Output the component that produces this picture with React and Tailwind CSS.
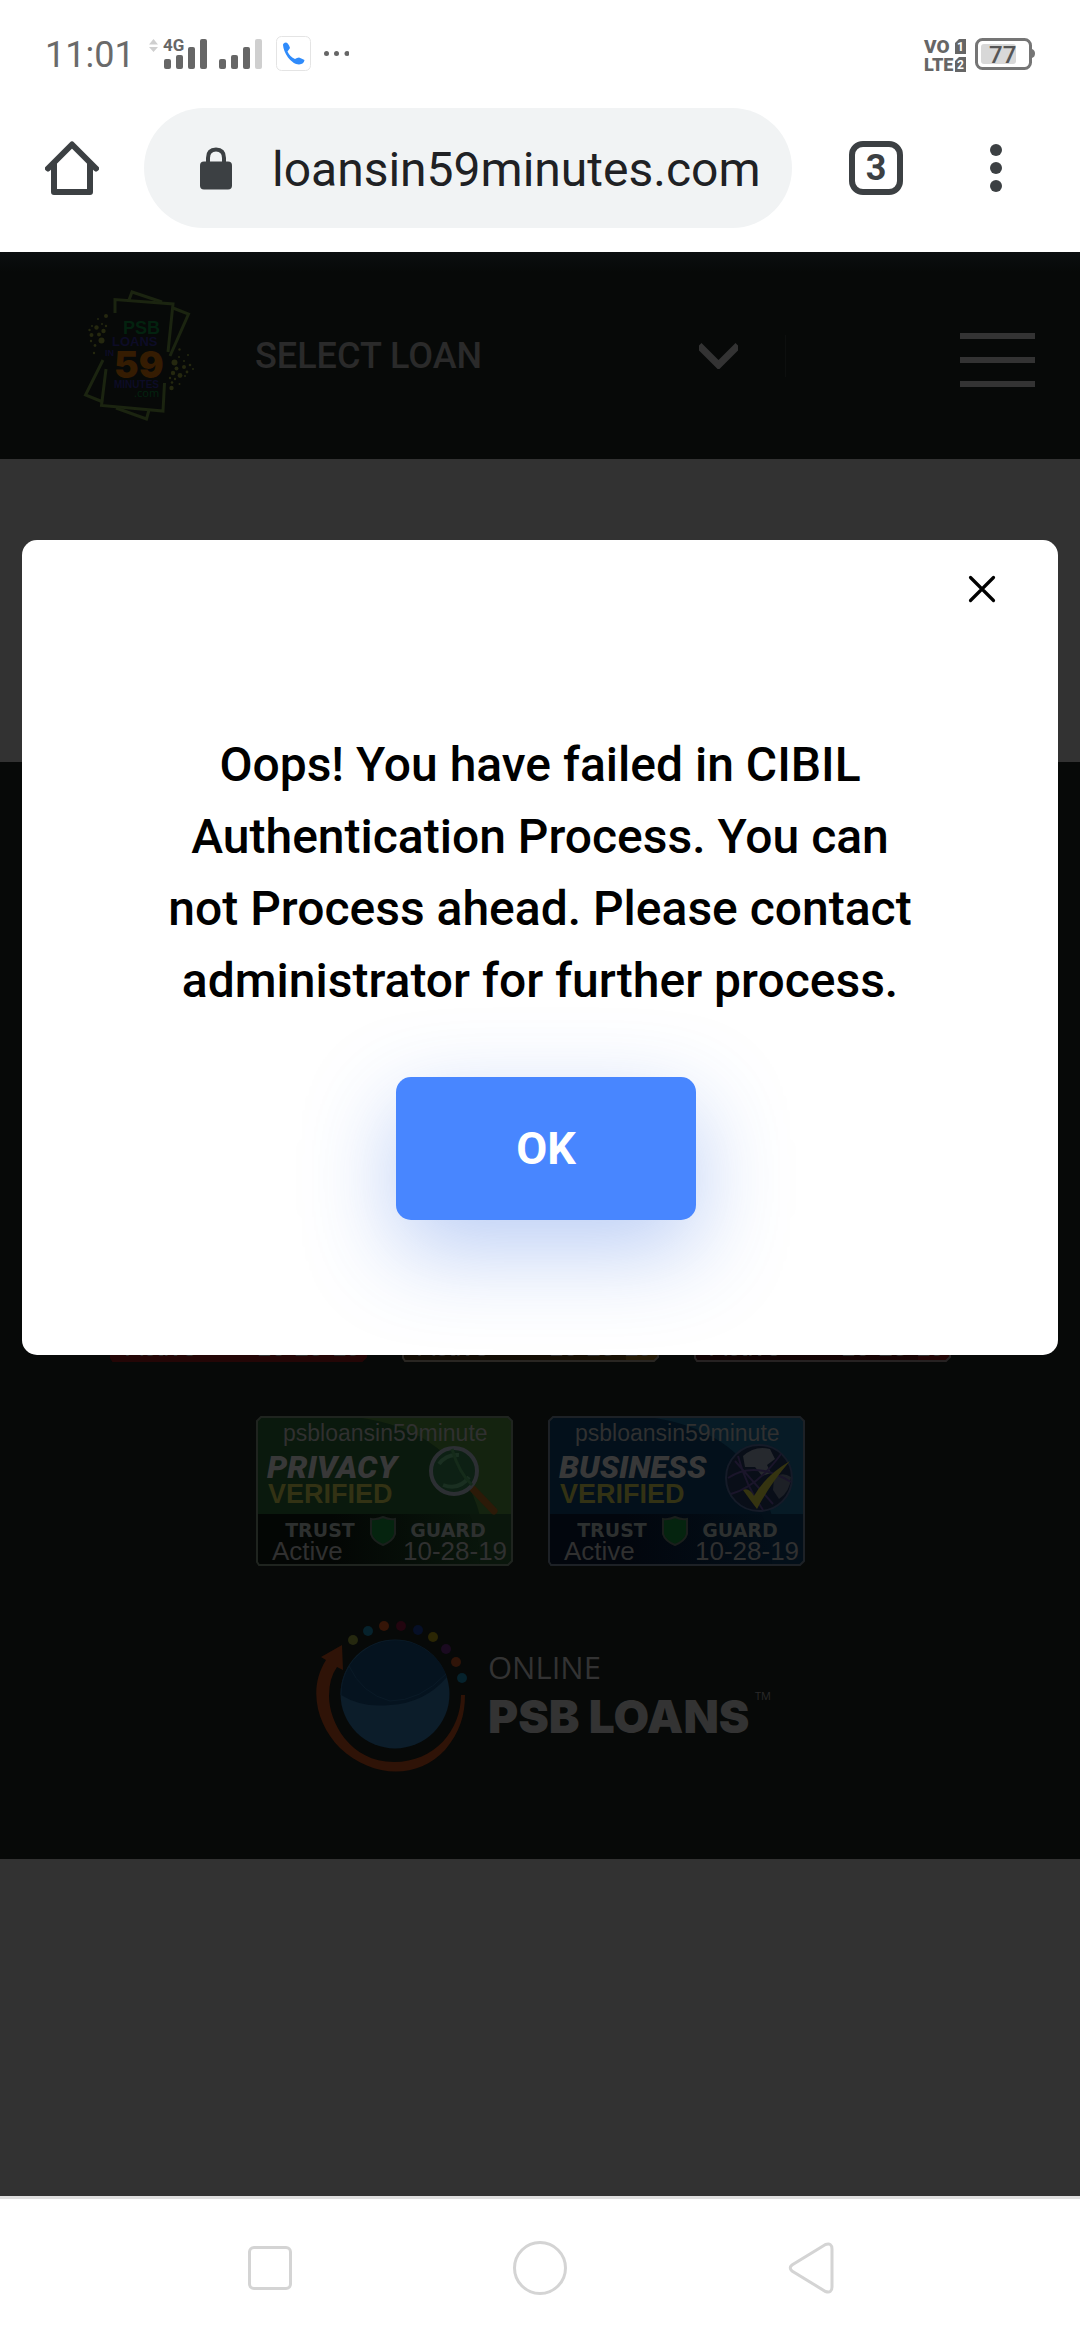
const bars = "fill-[#666666]";

function StatusBar() {
  return (
    <div className="flex h-[72px] items-end justify-between pr-[44px] pl-[45px] text-[#666666]">
      <div className="flex h-[42px] items-center">
        <span className="mt-2 mr-[14px] text-[36px] leading-[42px] text-[#6a6a6a]">11:01</span>
        <svg className="h-[42px] w-[200px]" viewBox="149 30 200 42" aria-hidden="true">
          <path d="M149 44.5 L153.5 39 L158 44.5Z M149 47 L153.5 52 L158 47Z" className="fill-[#cfcfcf]" />
          <text x="163" y="51" className="fill-[#666666] text-[17px] font-bold">4G</text>
          <rect x="164" y="59" width="7" height="10" rx="2" className={bars} />
          <rect x="176" y="55" width="7" height="14" rx="2" className={bars} />
          <rect x="188" y="47" width="7" height="22" rx="2" className={bars} />
          <rect x="200" y="39" width="7" height="30" rx="2" className={bars} />
          <rect x="219" y="59" width="7" height="10" rx="2" className={bars} />
          <rect x="231" y="55" width="7" height="14" rx="2" className={bars} />
          <rect x="243" y="47" width="7" height="22" rx="2" className={bars} />
          <rect x="255" y="39" width="7" height="30" rx="2" className="fill-[#cfcfcf]" />
          <rect x="276.5" y="36.5" width="34" height="34" rx="5" className="fill-white stroke-[#e4e4e4]" />
          <path
            d="M283 45 Q283 43 286 42.500 Q288.500 43 290 48 Q288.500 50 287.500 51.500 Q290 57 295 59 Q297 57.500 299 57.500 Q302 58.500 304.500 60 Q304 64 299 64.500 Q293 64 288 57.500 Q283.500 51 283 45Z"
            className="fill-[#2f8bfb]"
          />
          <circle cx="326.500" cy="53.500" r="2.500" className={bars} />
          <circle cx="336.500" cy="53.500" r="2.500" className={bars} />
          <circle cx="347" cy="53.500" r="2.500" className={bars} />
        </svg>
      </div>
      <svg className="h-[46px] w-[112px] -mb-1 overflow-visible" viewBox="924 30 112 46" aria-hidden="true">
        <text x="924" y="53" className="fill-[#666666] text-[19px] font-black">VO</text>
        <text x="924" y="71" className="fill-[#666666] text-[18px] font-black">LTE</text>
        <path d="M955 43 L959 39 H966 V54 H955Z M955 61 L959 57 H966 V72 H955Z" className="fill-[#666666]" />
        <text x="957" y="51" className="fill-white text-[12px] font-bold">1</text>
        <text x="957" y="69" className="fill-white text-[12px] font-bold">2</text>
        <rect x="976.5" y="39.5" width="54" height="29" rx="6" className="fill-white stroke-[#757575] stroke-3" />
        <rect x="981" y="44" width="35" height="20" rx="3" className="fill-[#d8d8d8]" />
        <path d="M1032 49 Q1035 50 1035 53.500 Q1035 57 1032 58Z" className="fill-[#757575]" />
        <text x="989" y="63" className="fill-[#555555] text-[24px] font-medium">77</text>
      </svg>
    </div>
  );
}

function BrowserBar() {
  return (
    <div className="flex h-[180px] items-center pt-3 pr-[78px] pl-[45px] text-[#3c4043]">
      <button aria-label="Home" className="mr-[45px] shrink-0">
        <svg className="h-[54px] w-[54px]" viewBox="0 0 54 54" fill="none" stroke="currentColor" strokeWidth="6" strokeLinecap="round" strokeLinejoin="round">
          <path d="M3 27.500 L27 3.500 L51 27.500" />
          <path d="M9 23 V51 H45 V23" />
        </svg>
      </button>
      <div className="mr-[57px] flex h-[120px] min-w-0 flex-1 items-center rounded-full bg-[#f1f3f4] pl-14">
        <svg className="h-[43px] w-[32px] shrink-0" viewBox="0 0 32 43" aria-hidden="true">
          <path d="M8 17 V11 Q8 2.500 16 2.500 Q24 2.500 24 11 V17" fill="none" stroke="currentColor" strokeWidth="4" />
          <rect y="14.500" width="32" height="28" rx="4" fill="currentColor" />
        </svg>
        <input
          aria-label="Address"
          className="mt-1 ml-10 w-full min-w-0 bg-transparent text-[48px] leading-[60px] text-[#202124] outline-none"
          defaultValue="loansin59minutes.com"
        />
      </div>
      <button aria-label="3 open tabs" className="mr-[87px] flex h-[54px] w-[54px] shrink-0 items-center justify-center rounded-[14px] border-6 border-[#3c4043] text-[36px] leading-none font-bold">
        3
      </button>
      <button aria-label="Menu" className="flex shrink-0 flex-col gap-[6px]">
        <span className="size-3 rounded-full bg-[#3c4043]" />
        <span className="size-3 rounded-full bg-[#3c4043]" />
        <span className="size-3 rounded-full bg-[#3c4043]" />
      </button>
    </div>
  );
}

const sparks = [
  [106, 316, 2], [98, 319, 1], [102, 324, 1], [106, 326, 1.2], [96.5, 327.5, 2.2], [92, 326, 1], [89.500, 330, 1.2],
  [103.500, 331, 2.2], [91.500, 335, 2], [99, 334.500, 2], [101.500, 340.500, 3], [91, 341, 1.2], [95, 345.500, 1.4], [94, 353, 1.2],
  [179.500, 349.500, 1.2], [188, 355, 1], [179, 357, 1], [174.500, 362.500, 3], [184, 361, 1], [190, 365, 1.3],
  [184, 367, 2], [176.500, 368.500, 2], [193, 369, 1], [173, 373, 2.2], [187, 372, 1.4], [180, 375.500, 2.4],
  [185, 376, 1], [170, 378, 1.2], [175, 379, 1.2], [172, 382.500, 1.3], [179.500, 384, 1], [171.500, 388, 2.2],
];

function BrandMark() {
  return (
    <svg className="h-[136px] w-[118px]" viewBox="80 288 118 136" role="img" aria-label="PSB Loans in 59 Minutes">
      <g className="fill-none stroke-[#1b2410] stroke-[3px]">
        <path d="M129 300 L132 292 L162 302" />
        <path d="M115 313 V299.500 L173 304 L168 352" />
        <path d="M173 308 L188.500 314 L170 356" />
        <path d="M103 360 L85.500 395 L103 402" />
        <path d="M106 369 L101.500 405.500 L163 411 L164.500 383" />
        <path d="M116 408 L146.500 419 L149 410" />
      </g>
      <g className="fill-[#25280f]">
        {sparks.map(([x, y, r]) => (
          <circle key={`${x}-${y}`} cx={x} cy={y} r={r} />
        ))}
      </g>
      <g className="font-['Liberation_Sans',sans-serif] font-bold">
        <text x="123" y="333.500" className="fill-[#03220f] text-[18px]">PSB</text>
        <text x="112" y="346" className="fill-[#0d0c26] text-[13px]">LOANS</text>
        <text x="105" y="356" className="fill-[#0d0c26] text-[9px]">IN</text>
        <text x="114" y="378" className="fill-[#351c02] font-[Inter,sans-serif] text-[37px] font-black">59</text>
        <text x="114" y="388" className="fill-[#0d0c26] text-[10px]">MINUTES</text>
      </g>
      <text x="134" y="397" className="fill-[#03220f] font-['Noto_Sans',sans-serif] text-[11px]">.com</text>
    </svg>
  );
}

function SiteHeader() {
  return (
    <header className="flex h-[207px] items-center bg-[#070908] bg-linear-to-b from-[#0b0e10] to-[#070908] to-10% pr-[45px] pl-20">
      <a href="#home" className="mr-[57px] shrink-0">
        <BrandMark />
      </a>
      <button className="flex min-w-0 flex-1 items-center justify-between text-[36px] leading-[42px] font-medium text-[#2a2a2a]">
        SELECT LOAN
        <svg className="mr-[47px] h-[27px] w-[39px]" viewBox="0 0 39 27" aria-hidden="true">
          <path d="M0 3.500 L19.500 23 L39 3.500" fill="none" stroke="#333333" strokeWidth="7" />
        </svg>
      </button>
      <div className="h-[42px] w-px bg-[#0d0f0e]" />
      <button aria-label="Open menu" className="mt-2 ml-[174px] flex w-[75px] shrink-0 flex-col gap-[18px]">
        <span className="h-[6px] bg-[#333333]" />
        <span className="h-[6px] bg-[#333333]" />
        <span className="h-[6px] bg-[#333333]" />
      </button>
    </header>
  );
}

function Magnifier() {
  return (
    <g>
      <path d="M217 73 L238 95" stroke="#2c1a08" strokeWidth="7" strokeLinecap="round" />
      <circle cx="198" cy="55" r="23" fill="#0d2014" stroke="#2c2f33" strokeWidth="4" />
      <path d="M183 48 Q190 38 203 39 M187 69 Q203 75 213 61" fill="none" stroke="#1a2f21" strokeWidth="4" />
      <path d="M196 33 Q203 57 216 69" fill="none" stroke="#152b1a" strokeWidth="3" />
    </g>
  );
}

function Globe() {
  return (
    <g>
      <circle cx="211" cy="62" r="33" fill="#090e18" stroke="#151b28" strokeWidth="2" />
      <path d="M195 40 Q207 29 222 33 L227 43 L219 49 L223 57 L214 60 L207 51 L197 51Z" fill="#26292e" />
      <path d="M226 62 Q234 55 243 61 Q242 76 231 83 L225 74Z" fill="#1d2026" />
      <path d="M180 62 Q206 44 243 66 M190 40 Q198 70 215 94 M183 78 Q210 70 233 38 M187 45 L225 88" fill="none" stroke="#1a152a" strokeWidth="2" />
      <path d="M195 74 Q201 71 206 80 Q218 59 242 45 Q222 68 209 93 Q202 84 195 74Z" fill="#353410" />
    </g>
  );
}

const badgeTones = {
  green: { id: "green", base: "#0a190d", light: "#14230f", low: "#030604", corner: "#0a160c", edge: "#1f241f" },
  blue: { id: "blue", base: "#03101b", light: "#071b26", low: "#02060d", corner: "#030f19", edge: "#1d2126" },
  red: { id: "red", base: "#240606", light: "#300808", low: "#240606", corner: "#240606", edge: "#240606" },
  amber: { id: "amber", base: "#1a1204", light: "#241b06", low: "#120c04", corner: "#241a06", edge: "#292622" },
  maroon: { id: "maroon", base: "#1a0404", light: "#240606", low: "#110303", corner: "#220505", edge: "#262222" },
};

function SealBadge({ tone, name, children }) {
  const c = badgeTones[tone];
  return (
    <svg className="h-[150px] w-[257px] shrink-0 font-['Liberation_Sans',Arial,sans-serif]" viewBox="0 0 257 150">
      <defs>
        <linearGradient id={`low-${c.id}`} x1="0" x2="1" y1="0" y2="0">
          <stop offset="0.3" stopColor={c.low} />
          <stop offset="1" stopColor={c.base} />
        </linearGradient>
        <clipPath id={`seal-${c.id}`}>
          <path d="M5 1 H252 L256 5 V145 L252 149 H3 L1 146 V5Z" />
        </clipPath>
      </defs>
      <g clipPath={`url(#seal-${c.id})`}>
        <rect width="257" height="150" fill={c.base} />
        <path d="M90 0 Q200 10 224 100 L228 150 H257 V0Z" fill={c.light} />
        <rect y="98" width="257" height="52" fill={`url(#low-${c.id})`} />
        <path d="M213 98 Q224 120 224 150 H257 V98Z" fill={c.corner} />
      </g>
      <path d="M5 1 H252 L256 5 V145 L252 149 H3 L1 146 V5Z" fill="none" stroke={c.edge} strokeWidth="2" />
      {name && (
        <g>
          <text x="27" y="25" className="fill-[#303030] text-[23px]">psbloansin59minute</text>
          <text x="11" y="62" className="fill-[#383838] font-[Roboto,sans-serif] text-[32px] font-black italic">
            {name}
          </text>
          <text x="12" y="87" className="fill-[#333214] text-[27px] font-bold">VERIFIED</text>
          <g className="fill-[#2d302f] font-['DejaVu_Sans',sans-serif] text-[19px] font-bold" textAnchor="middle">
            <text x="64" y="121">TRUST</text>
            <text x="192" y="121">GUARD</text>
          </g>
          <path d="M115 103 Q121 104 127 101 Q133 104 139 103 V118 Q137 125 127 129 Q117 125 115 118Z" fill="#05240f" stroke="#1a1f1c" strokeWidth="2" />
        </g>
      )}
      {children}
      <g className="fill-[#303030] text-[26px]">
        <text x="16" y="144">Active</text>
        <text x="147" y="144">10-28-19</text>
      </g>
    </svg>
  );
}

const ringDots = [
  [353, 1640, "#25280f"], [368, 1631, "#06222c"], [384, 1626, "#351507"], [401, 1626, "#22050f"], [418, 1630, "#060f26"],
  [433, 1637, "#2b2604"], [446, 1649, "#1a0a20"], [456, 1662, "#301408"], [462, 1678, "#06222c"],
];

function OnlineLogo() {
  return (
    <svg className="h-[153px] w-[456px]" viewBox="316 1620 456 153" role="img" aria-label="Online PSB Loans">
      <circle cx="395" cy="1694" r="54.500" fill="#0c1d2a" />
      <path d="M341 1695 A54.500 54.500 0 0 1 447 1677 Q425 1703 390 1705 Q362 1708 341 1695Z" fill="#05131f" />
      <path d="M341 1695 A54.500 54.500 0 0 1 349 1666 Q362 1694 390 1701 Q420 1701 446 1674" fill="none" stroke="#0a1a27" strokeWidth="1" />
      <path
        d="M342 1645 L321 1657 L326 1660 C307 1690 318 1726 340 1748 C372 1778 417 1780 445 1750 C460 1732 465 1715 465 1695 L461 1695 C461 1730 435 1762 394 1762 C350 1762 329 1722 329 1696 Q329 1678 337 1667 L343 1670Z"
        fill="#2f1307"
      />
      {ringDots.map(([x, y, color]) => (
        <circle key={x} cx={x} cy={y} r="5" fill={color} />
      ))}
      <text x="488" y="1679" className="fill-[#333333] font-['Open_Sans',sans-serif] text-[31px]">ONLINE</text>
      <text x="488" y="1733" className="fill-[#333333] font-[Inter,sans-serif] text-[46px] font-black">PSB LOANS</text>
      <text x="755" y="1700" className="fill-[#2a2a2a] font-['Open_Sans',sans-serif] text-[11px]">TM</text>
    </svg>
  );
}

function SiteFooter() {
  return (
    <footer className="flex flex-col items-center bg-[#070908] pt-[450px] pr-[19px] pb-[86px]">
      <div className="flex w-[841px] flex-wrap justify-center gap-x-[35px] gap-y-[54px]">
        <SealBadge tone="red" />
        <SealBadge tone="amber" />
        <SealBadge tone="maroon" />
        <SealBadge tone="green" name="PRIVACY">
          <Magnifier />
        </SealBadge>
        <SealBadge tone="blue" name="BUSINESS">
          <Globe />
        </SealBadge>
      </div>
      <a href="#psb-loans" className="mt-[54px] ml-[27px]">
        <OnlineLogo />
      </a>
    </footer>
  );
}

function FailureDialog() {
  return (
    <div
      role="dialog"
      aria-modal="true"
      aria-labelledby="dialog-message"
      className="absolute inset-x-[22px] top-[288px] flex flex-col items-center rounded-[15px] bg-white pt-[189px] pb-[135px]"
    >
      <button aria-label="Close" className="absolute top-[35px] right-[62px]">
        <svg className="size-7" viewBox="0 0 28 28" stroke="#000000" strokeWidth="3.200" strokeLinecap="round">
          <path d="M2.500 2.500 L25.500 25.500 M25.500 2.500 L2.500 25.500" />
        </svg>
      </button>
      <p id="dialog-message" className="max-w-[760px] text-center text-[48px] leading-[72px] font-medium text-black">
        Oops! You have failed in CIBIL Authentication Process. You can not Process ahead. Please contact administrator for further process.
      </p>
      <button className="mt-[60px] ml-3 h-[143px] w-[300px] rounded-[15px] bg-[#4886ff] text-[45px] leading-none font-bold text-white shadow-[0_30px_90px_rgba(54,108,227,0.34)]">
        OK
      </button>
    </div>
  );
}

function SystemNav() {
  return (
    <nav className="flex h-[144px] items-center justify-between border-t-3 border-[#dedede] bg-white pr-[246px] pb-1 pl-[248px]">
      <button aria-label="Recent apps" className="size-11 rounded-[6px] border-3 border-[#d4d4d4]" />
      <button aria-label="Home screen" className="size-[54px] rounded-full border-3 border-[#d4d4d4]" />
      <button aria-label="Back">
        <svg className="h-[52px] w-[46px]" viewBox="0 0 46 52" fill="none" stroke="#d4d4d4" strokeWidth="3">
          <path d="M37.500 2.500 L4 23 Q0.500 26 4 29 L37.500 49.500 Q44 51.500 44 45 V7 Q44 0.500 37.500 2.500Z" />
        </svg>
      </button>
    </nav>
  );
}

export default function App() {
  return (
    <div className="flex min-h-screen flex-col bg-white font-[Roboto,sans-serif]">
      <StatusBar />
      <BrowserBar />
      <main className="relative flex flex-1 flex-col bg-[#323232]">
        <SiteHeader />
        <section className="h-[303px]" />
        <SiteFooter />
        <FailureDialog />
      </main>
      <SystemNav />
    </div>
  );
}
